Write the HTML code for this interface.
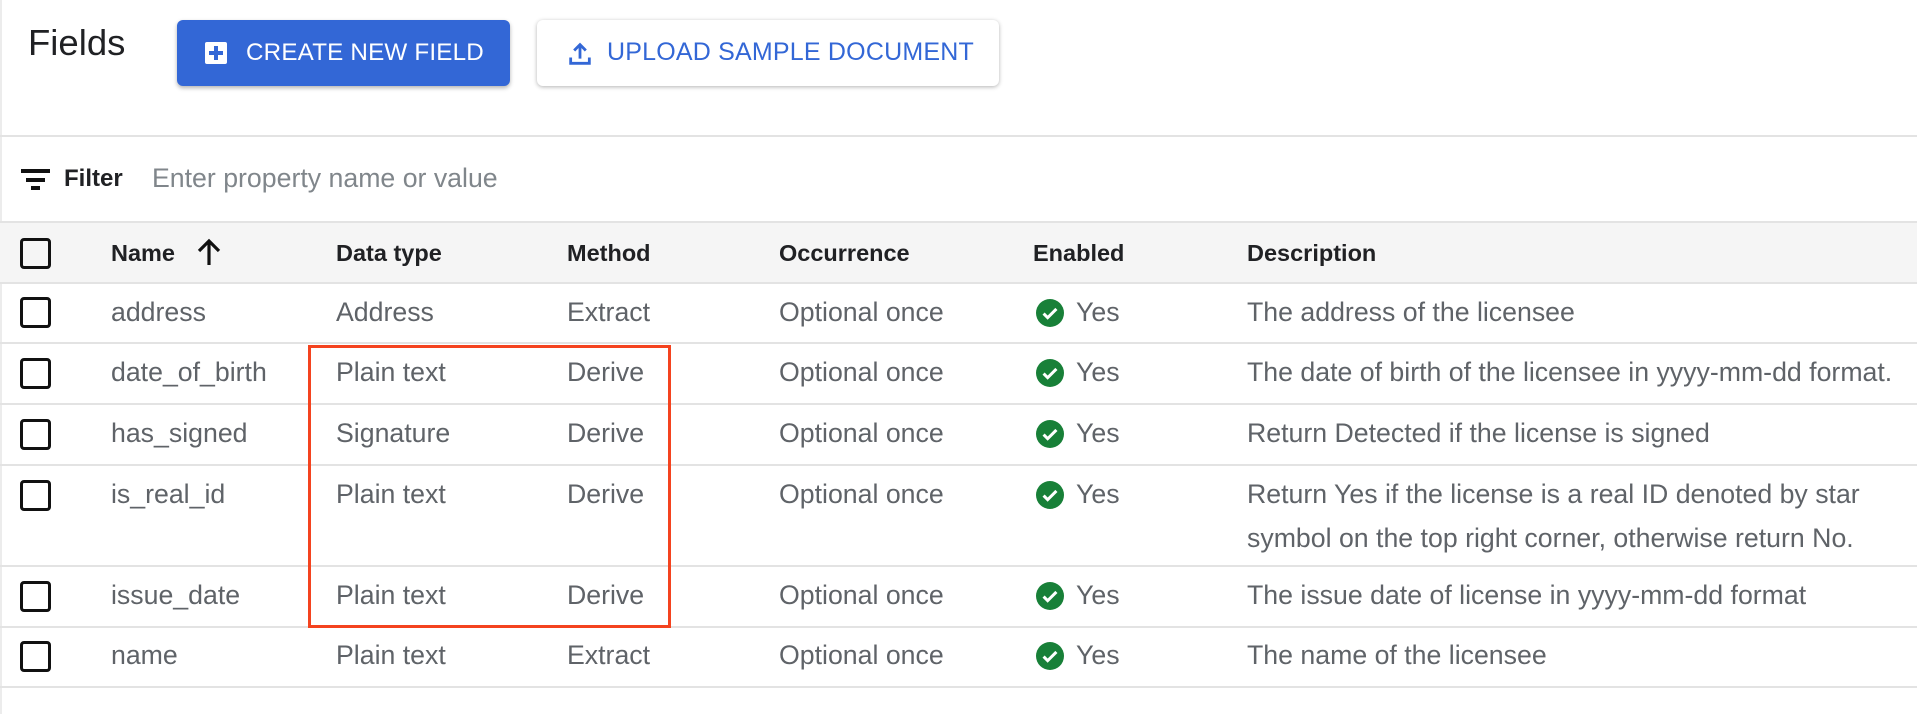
<!DOCTYPE html>
<html><head><meta charset="utf-8"><style>
*{margin:0;padding:0;box-sizing:border-box}
body{width:1917px;height:714px;background:#fff;font-family:"Liberation Sans",Arial,sans-serif;position:relative;overflow:hidden;color:#5f6368}
.a{position:absolute;white-space:nowrap}
.hl{position:absolute;left:0;width:1917px;height:2px;background:#e3e3e3}
.cb{position:absolute;left:20px;width:31px;height:31px;border:3.5px solid #111;border-radius:4px}
.t{position:absolute;font-size:26.7px;line-height:30px;white-space:nowrap;margin-top:-2px}
.h{position:absolute;font-size:23.5px;font-weight:bold;color:#202124;line-height:28px;white-space:nowrap}
.ck{position:absolute;left:1036px;width:28px;height:28px}
</style></head><body>
<div style="position:absolute;left:0;top:0;width:2px;height:714px;background:#ececec"></div>
<div class="a" style="left:28px;top:22px;font-size:36.5px;color:#202124">Fields</div>
<div class="a" style="left:177px;top:20px;width:333px;height:66px;background:#3367d6;border-radius:6px;box-shadow:0 2px 4px rgba(0,0,0,.3)">
 <div class="a" style="left:28px;top:22px;width:22px;height:22px;background:#fff;border-radius:2px"><div class="a" style="left:4px;top:9px;width:14px;height:4px;background:#3367d6"></div><div class="a" style="left:9px;top:4px;width:4px;height:14px;background:#3367d6"></div></div>
 <div class="a" style="left:69px;top:19px;font-size:24.2px;color:#fff;letter-spacing:.2px">CREATE NEW FIELD</div>
</div>
<div class="a" style="left:537px;top:20px;width:462px;height:66px;background:#fff;border-radius:6px;box-shadow:0 1px 4px rgba(0,0,0,.3)">
 <svg class="a" style="left:29px;top:20px" width="28" height="28" viewBox="0 0 24 24"><path d="M12 4v12M7 9l5-5 5 5M4 15v5h16v-5" fill="none" stroke="#3367d6" stroke-width="2.4"/></svg>
 <div class="a" style="left:70px;top:18px;font-size:25px;color:#3367d6;letter-spacing:.2px">UPLOAD SAMPLE DOCUMENT</div>
</div>
<div class="hl" style="top:135px"></div>
<div class="a" style="left:21px;top:169px;width:29px;height:4px;background:#111"></div>
<div class="a" style="left:26px;top:178px;width:19px;height:4px;background:#111"></div>
<div class="a" style="left:31px;top:186px;width:9px;height:4px;background:#111"></div>
<div class="a" style="left:64px;top:165px;font-size:24px;font-weight:bold;color:#202124">Filter</div>
<div class="a" style="left:152px;top:163px;font-size:26.7px;color:#80868b">Enter property name or value</div>
<div class="a" style="left:0;top:222px;width:1917px;height:61px;background:#f5f5f5"></div>
<div class="hl" style="top:221px"></div>
<div class="hl" style="top:282px"></div>
<div class="cb" style="top:238px"></div>
<div class="h" style="left:111px;top:239px">Name</div>
<svg class="a" style="left:196px;top:237px" width="26" height="30" viewBox="0 0 26 30"><path d="M13 28V4M3 14L13 4l10 10" fill="none" stroke="#111" stroke-width="3.2"/></svg>
<div class="h" style="left:336px;top:239px">Data type</div>
<div class="h" style="left:567px;top:239px">Method</div>
<div class="h" style="left:779px;top:239px">Occurrence</div>
<div class="h" style="left:1033px;top:239px">Enabled</div>
<div class="h" style="left:1247px;top:239px">Description</div>

<div class="hl" style="top:342px"></div>
<div class="hl" style="top:403px"></div>
<div class="hl" style="top:464px"></div>
<div class="hl" style="top:565px"></div>
<div class="hl" style="top:626px"></div>
<div class="hl" style="top:686px"></div>

<div class="cb" style="top:297px"></div>
<div class="t" style="left:111px;top:299px">address</div><div class="t" style="left:336px;top:299px">Address</div><div class="t" style="left:567px;top:299px">Extract</div><div class="t" style="left:779px;top:299px">Optional once</div>
<svg class="ck" style="top:299px" viewBox="0 0 24 24"><circle cx="12" cy="12" r="12" fill="#188038"/><path d="M6.5 12.5l3.5 3.5 7.5-7.5" fill="none" stroke="#fff" stroke-width="2.6"/></svg><div class="t" style="left:1076px;top:299px">Yes</div>
<div class="t" style="left:1247px;top:299px">The address of the licensee</div>

<div class="cb" style="top:358px"></div>
<div class="t" style="left:111px;top:359px">date_of_birth</div><div class="t" style="left:336px;top:359px">Plain text</div><div class="t" style="left:567px;top:359px">Derive</div><div class="t" style="left:779px;top:359px">Optional once</div>
<svg class="ck" style="top:359px" viewBox="0 0 24 24"><circle cx="12" cy="12" r="12" fill="#188038"/><path d="M6.5 12.5l3.5 3.5 7.5-7.5" fill="none" stroke="#fff" stroke-width="2.6"/></svg><div class="t" style="left:1076px;top:359px">Yes</div>
<div class="t" style="left:1247px;top:359px">The date of birth of the licensee in yyyy-mm-dd format.</div>

<div class="cb" style="top:419px"></div>
<div class="t" style="left:111px;top:420px">has_signed</div><div class="t" style="left:336px;top:420px">Signature</div><div class="t" style="left:567px;top:420px">Derive</div><div class="t" style="left:779px;top:420px">Optional once</div>
<svg class="ck" style="top:420px" viewBox="0 0 24 24"><circle cx="12" cy="12" r="12" fill="#188038"/><path d="M6.5 12.5l3.5 3.5 7.5-7.5" fill="none" stroke="#fff" stroke-width="2.6"/></svg><div class="t" style="left:1076px;top:420px">Yes</div>
<div class="t" style="left:1247px;top:420px">Return Detected if the license is signed</div>

<div class="cb" style="top:480px"></div>
<div class="t" style="left:111px;top:481px">is_real_id</div><div class="t" style="left:336px;top:481px">Plain text</div><div class="t" style="left:567px;top:481px">Derive</div><div class="t" style="left:779px;top:481px">Optional once</div>
<svg class="ck" style="top:481px" viewBox="0 0 24 24"><circle cx="12" cy="12" r="12" fill="#188038"/><path d="M6.5 12.5l3.5 3.5 7.5-7.5" fill="none" stroke="#fff" stroke-width="2.6"/></svg><div class="t" style="left:1076px;top:481px">Yes</div>
<div class="t" style="left:1247px;top:481px">Return Yes if the license is a real ID denoted by star</div>
<div class="t" style="left:1247px;top:525px">symbol on the top right corner, otherwise return No.</div>

<div class="cb" style="top:581px"></div>
<div class="t" style="left:111px;top:582px">issue_date</div><div class="t" style="left:336px;top:582px">Plain text</div><div class="t" style="left:567px;top:582px">Derive</div><div class="t" style="left:779px;top:582px">Optional once</div>
<svg class="ck" style="top:582px" viewBox="0 0 24 24"><circle cx="12" cy="12" r="12" fill="#188038"/><path d="M6.5 12.5l3.5 3.5 7.5-7.5" fill="none" stroke="#fff" stroke-width="2.6"/></svg><div class="t" style="left:1076px;top:582px">Yes</div>
<div class="t" style="left:1247px;top:582px">The issue date of license in yyyy-mm-dd format</div>

<div class="cb" style="top:641px"></div>
<div class="t" style="left:111px;top:642px">name</div><div class="t" style="left:336px;top:642px">Plain text</div><div class="t" style="left:567px;top:642px">Extract</div><div class="t" style="left:779px;top:642px">Optional once</div>
<svg class="ck" style="top:642px" viewBox="0 0 24 24"><circle cx="12" cy="12" r="12" fill="#188038"/><path d="M6.5 12.5l3.5 3.5 7.5-7.5" fill="none" stroke="#fff" stroke-width="2.6"/></svg><div class="t" style="left:1076px;top:642px">Yes</div>
<div class="t" style="left:1247px;top:642px">The name of the licensee</div>

<div class="a" style="left:308px;top:345px;width:363px;height:283px;border:3px solid #f4431f"></div>
</body></html>
